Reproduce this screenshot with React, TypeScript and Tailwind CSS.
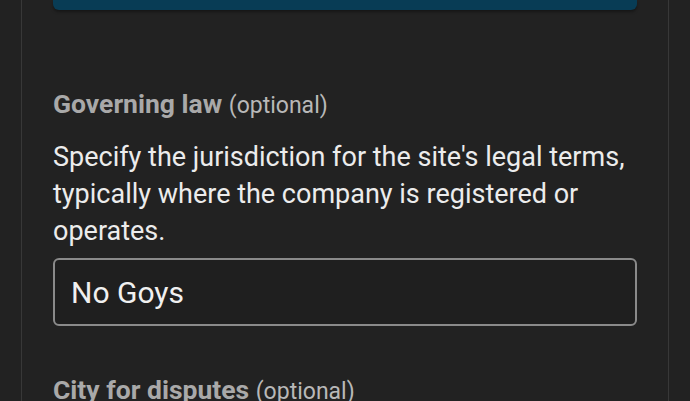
export default function App() {
  return (
    <div className="h-[401px] overflow-hidden bg-[#222222] px-[21px]" style={{ fontFamily: "Roboto, 'Noto Sans', sans-serif" }}>
      <div className="h-full border-x border-[#383838] pl-[31px] pr-[31px]">
        <div className="h-[10px] rounded-b-[6px] bg-[#083c55] shadow-[0_2px_3px_rgba(0,0,0,0.35)]" />

        <div className="mt-[78px]">
          <label className="block text-[26.5px] leading-[32px] text-[#a9a9a9]">
            <span className="font-bold">Governing law</span>{" "}
            <span className="text-[23px] text-[#b8b8b8]">(optional)</span>
          </label>
          <p className="mt-[17px] text-[27px] leading-[37px] text-[#ececec]">
            Specify the jurisdiction for the site's legal terms, typically where the company is registered or operates.
          </p>
          <div className="mt-[8px] flex h-[68px] items-center rounded-[6px] border-2 border-[#8a8a8a] bg-[#1f1f1f] px-[16px] text-[30px] text-[#f0f0f0]">
            No Goys
          </div>
        </div>

        <div className="mt-[48px]">
          <label className="block text-[26.5px] leading-[32px] text-[#a9a9a9]">
            <span className="font-bold">City for disputes</span>{" "}
            <span className="text-[23px] text-[#b8b8b8]">(optional)</span>
          </label>
        </div>
      </div>
    </div>
  );
}
